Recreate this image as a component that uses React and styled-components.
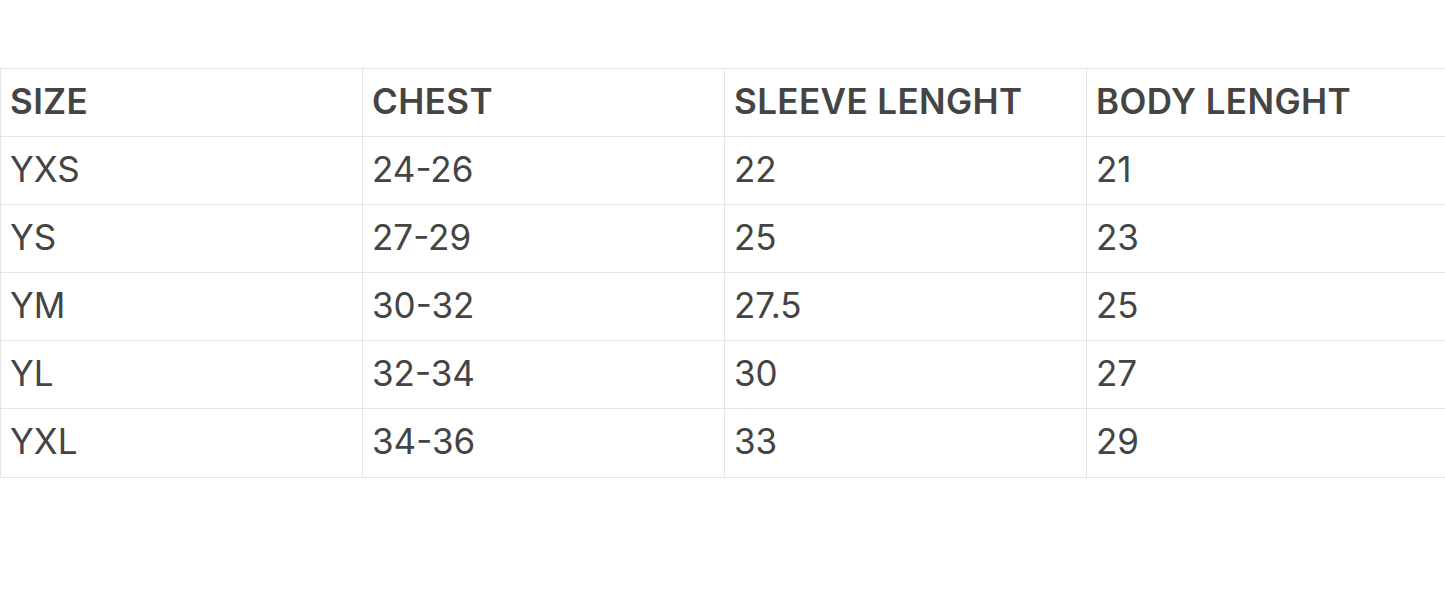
import React from "react";
import styled, { createGlobalStyle } from "styled-components";

const GlobalStyle = createGlobalStyle`
  body {
    margin: 0;
    background: #fff;
    font-family: Inter, "Liberation Sans", Arial, sans-serif;
    overflow: hidden;
  }
`

const Wrapper = styled.div`
  padding-top: 68px;
`

const Table = styled.table`
  width: 1449px;
  border-collapse: collapse;
  table-layout: fixed;
  color: #444;
`

const Row = styled.tr`
  &:last-child td {
    height: 65px;
  }
`

const Cell = styled.td`
  border: 1px solid #e3e3e3;
  height: 64px;
  padding: 0 9px 3px;
  font-size: 35px;
  line-height: 1;
  font-weight: ${p => (p.head ? 600 : 400)};
  letter-spacing: ${p => (p.head ? "0.4px" : "0")};
  vertical-align: middle;
  text-align: left;
  white-space: nowrap;
`

const headers = ["SIZE", "CHEST", "SLEEVE LENGHT", "BODY LENGHT"]

const rows = [
  ["YXS", "24-26", "22", "21"],
  ["YS", "27-29", "25", "23"],
  ["YM", "30-32", "27.5", "25"],
  ["YL", "32-34", "30", "27"],
  ["YXL", "34-36", "33", "29"],
]

const App = () => {
  return (
    <Wrapper>
      <GlobalStyle />
      <Table>
        <tbody>
          <Row>
            {headers.map(h => (
              <Cell as="th" head key={h}>{h}</Cell>
            ))}
          </Row>
          {rows.map(r => (
            <Row key={r[0]}>
              {r.map((v, i) => (
                <Cell key={i}>{v}</Cell>
              ))}
            </Row>
          ))}
        </tbody>
      </Table>
    </Wrapper>
  )
}

export default App;
